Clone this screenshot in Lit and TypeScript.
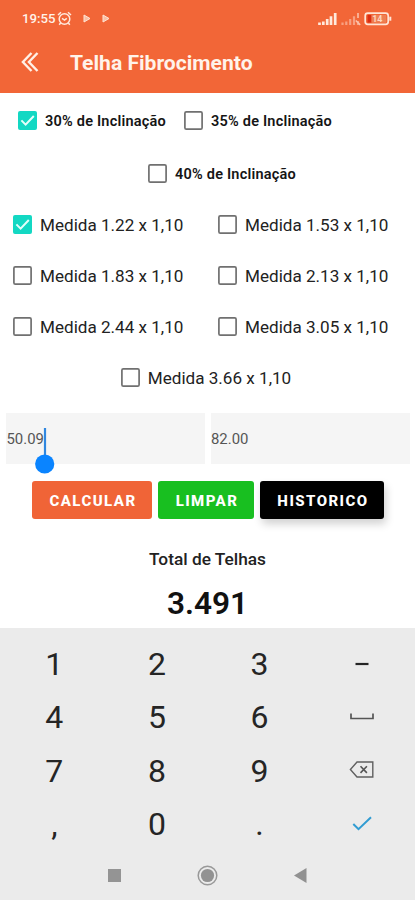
import { LitElement, html, css, svg } from "lit";
import { customElement, property, state } from "lit/decorators.js";

@customElement("check-item")
class CheckItem extends LitElement {
  @property() label = "";
  @property({ type: Boolean }) checked = false;
  @property({ type: Boolean, reflect: true }) strong = false;

  static styles = css`
    :host { display: flex; align-items: center; gap: 8px; height: 20px; font-size: 17.1px; color: #222; white-space: nowrap; }
    :host([strong]) { font-size: 14.5px; letter-spacing: .22px; font-weight: 600; color: #151515; }
    svg { display: block; width: 19px; height: 19px; flex: none; }
    span { line-height: 20px; padding-top: 2px; }
    :host([strong]) span { padding-top: 4px; }
  `;

  render() {
    return html`
      <svg viewBox="0 0 19 19">
        ${this.checked
          ? svg`<rect width="19" height="19" rx="2" fill="#13d8c3"/><path d="M3.4 9.4l4.2 4.2 8.2-8.6" fill="none" stroke="#e4fffb" stroke-width="2"/>`
          : svg`<rect x=".9" y=".9" width="17.2" height="17.2" rx="1.4" fill="#fff" stroke="#707070" stroke-width="1.7"/>`}
      </svg>
      <span>${this.label}</span>
    `;
  }
}

@customElement("app-root")
class AppRoot extends LitElement {
  @state() private keys = ["1", "2", "3", "minus", "4", "5", "6", "space", "7", "8", "9", "delete", ",", "0", ".", "done"];

  static styles = css`
    :host { display: flex; flex-direction: column; width: 415px; height: 900px; overflow: hidden; background: #fff; font-family: Roboto, sans-serif; color: #111; }
    svg { display: block; flex: none; }
    .top { height: 93px; flex: none; background: #f26637; color: #fff3ea; }
    .status { display: flex; align-items: center; height: 37px; padding: 0 23px 0 22px; font-size: 13.2px; font-weight: 500; }
    .time { width: 35px; }
    .grow { flex: 1; }
    .play { margin-left: 11px; }
    .bar { display: flex; align-items: center; height: 49px; padding-left: 21px; }
    .title { margin-left: 31px; font-size: 21.1px; font-weight: 700; padding-top: 1px; }
    .slopes { display: flex; gap: 18px; padding: 17px 0 0 18px; }
    .single { display: flex; justify-content: center; }
    .slope-last { padding: 33px 0 0 29px; }
    .sizes { display: grid; grid-template-columns: 205px 1fr; row-gap: 31px; padding: 31px 0 0 13px; }
    .size-last { padding: 31px 3px 0 0; }
    .fields { display: grid; grid-template-columns: 199px 199.5px; gap: 5.5px; padding: 25.5px 0 0 6px; }
    .field { position: relative; height: 51px; box-sizing: border-box; background: #f5f5f5; font-size: 14.9px; line-height: 52px; color: #555; padding-left: .5px; }
    .caret { position: absolute; left: 29px; top: 15px; z-index: 1; }
    .buttons { display: flex; gap: 6px; padding: 17px 0 0 32px; }
    .btn { box-sizing: border-box; padding-left: 2px; height: 38px; line-height: 40px; border-radius: 3px; text-align: center; color: #fff; font-size: 15px; font-weight: 800; letter-spacing: 1.45px; }
    .calc { width: 120px; background: #f06437; }
    .clear { width: 96px; background: #18bf20; }
    .hist { width: 124px; background: #000; box-shadow: 2px 5px 9px rgba(0, 0, 0, .18); }
    .caption { margin-top: 30px; text-align: center; font-size: 17.3px; line-height: 20px; font-weight: 500; color: #222; }
    .total { margin-top: 16px; text-align: center; font-size: 31.6px; line-height: 38px; font-weight: 600; }
    .keyboard { margin-top: auto; height: 272px; flex: none; background: #ebebeb; }
    .keys { display: grid; grid-template-columns: repeat(4, 102.6px); grid-auto-rows: 53.5px; padding: 9px 0 0 3px; }
    .key { display: flex; align-items: center; justify-content: center; font-size: 32px; line-height: 54px; color: #252525; }
    .nav { display: flex; align-items: center; height: 27px; padding: 11px 0 0 107.5px; }
    .home { margin-left: 76px; }
    .back { margin-left: 76px; }
  `;

  private key(k: string) {
    switch (k) {
      case "minus":
        return svg`<svg width="26" height="20"><path d="M6.5 10h13" stroke="#252525" stroke-width="2.2"/></svg>`;
      case "space":
        return svg`<svg width="26" height="20"><path d="M2 6.5v5h22v-5" fill="none" stroke="#555" stroke-width="1.7"/></svg>`;
      case "delete":
        return svg`<svg width="26" height="20"><path d="M8 1h15.8v15H8L1.4 8.5z" fill="none" stroke="#606060" stroke-width="1.4"/><path d="M11.5 5.3l6.4 6.6m0-6.6l-6.4 6.6" stroke="#555" stroke-width="1.6"/></svg>`;
      case "done":
        return svg`<svg width="26" height="20"><path d="M4.3 10l5.2 5.2L22 3.2" fill="none" stroke="#319cd2" stroke-width="2"/></svg>`;
      default:
        return k;
    }
  }

  private play() {
    return html`<svg class="play" width="8" height="9" viewBox="0 0 8 9"><path d="M1 1v7l6-3.5z" fill="#f9c0a5" stroke="#ffe4d3" stroke-width="1"/></svg>`;
  }

  render() {
    return html`
      <header class="top">
        <div class="status">
          <span class="time">19:55</span>
          <svg width="15" height="15" viewBox="0 0 15 15" fill="none" stroke="#ffe9dc" stroke-width="1.5">
            <circle cx="7.5" cy="8" r="5.3"/><path d="M1 4l3-2.8M14 4l-3-2.8M3.6 12l-1.4 1.8M11.4 12l1.4 1.8M5 7.3l2.5 1.8 2.3-1.8"/>
          </svg>
          ${this.play()}${this.play()}
          <span class="grow"></span>
          <svg width="74" height="14" viewBox="0 0 74 14">
            <path d="M1.5 13v-2.5M5.3 13V9.4M9.2 13V7M13 13V4.3M17.2 13V1" stroke="#ffe9dc" stroke-width="2.7"/>
            <path d="M24.5 13v-2.5M28.3 13V9.4M32.2 13V7M36 13V4.3M40 13V9" stroke="#f8a182" stroke-width="2.2"/>
            <path d="M40 1v5M37.8 8.5l4.4 4.4" stroke="#fbc1a9" stroke-width="1.6"/>
            <rect x="47.2" y="1.2" width="23" height="11.2" rx="2.6" fill="#f26637" stroke="#ffe5d6" stroke-width="1.7"/>
            <path d="M49.5 3h4v7.6h-4z" fill="#dc2d12"/><path d="M53.5 3h14.6v7.6H53.5z" fill="#ed8054"/>
            <path d="M72.3 4.7v4" stroke="#ffe5d6" stroke-width="2"/>
            <text x="59.3" y="10.3" font-size="9" font-weight="600" text-anchor="middle" fill="#ffd9c5">14</text>
          </svg>
        </div>
        <div class="bar">
          <svg width="18" height="20" viewBox="0 0 18 20" fill="none" stroke="#fff0e6" stroke-width="2.4"><path d="M10.5 1L1.9 10l8.6 9M16.5 1L7.9 10l8.6 9"/></svg>
          <span class="title">Telha Fibrocimento</span>
        </div>
      </header>
      <div class="slopes">
        <check-item strong checked label="30% de Inclinação"></check-item>
        <check-item strong label="35% de Inclinação"></check-item>
      </div>
      <div class="single slope-last"><check-item strong label="40% de Inclinação"></check-item></div>
      <div class="sizes">
        <check-item checked label="Medida 1.22 x 1,10"></check-item>
        <check-item label="Medida 1.53 x 1,10"></check-item>
        <check-item label="Medida 1.83 x 1,10"></check-item>
        <check-item label="Medida 2.13 x 1,10"></check-item>
        <check-item label="Medida 2.44 x 1,10"></check-item>
        <check-item label="Medida 3.05 x 1,10"></check-item>
      </div>
      <div class="single size-last"><check-item label="Medida 3.66 x 1,10"></check-item></div>
      <div class="fields">
        <div class="field">50.09
          <svg class="caret" width="20" height="46" viewBox="0 0 20 46"><path d="M10 0v30" stroke="#2f87e0" stroke-width="2.2"/><circle cx="9.7" cy="36" r="9.6" fill="#0a84ff"/></svg>
        </div>
        <div class="field">82.00</div>
      </div>
      <div class="buttons">
        <div class="btn calc">CALCULAR</div>
        <div class="btn clear">LIMPAR</div>
        <div class="btn hist">HISTORICO</div>
      </div>
      <div class="caption">Total de Telhas</div>
      <div class="total">3.491</div>
      <div class="keyboard">
        <div class="keys">${this.keys.map((k) => html`<div class="key">${this.key(k)}</div>`)}</div>
        <div class="nav">
          <svg width="13" height="13"><path d="M0 0h13v13H0z" fill="#949494"/></svg>
          <svg class="home" width="21" height="21" viewBox="0 0 21 21"><circle cx="10.5" cy="10.5" r="9.3" fill="none" stroke="#999" stroke-width="1.5"/><circle cx="10.5" cy="10.5" r="6.6" fill="#929292"/></svg>
          <svg class="back" width="13" height="15" viewBox="0 0 13 15"><path d="M0 7.5L12.5 0v15z" fill="#919191"/></svg>
        </div>
      </div>
    `;
  }
}
